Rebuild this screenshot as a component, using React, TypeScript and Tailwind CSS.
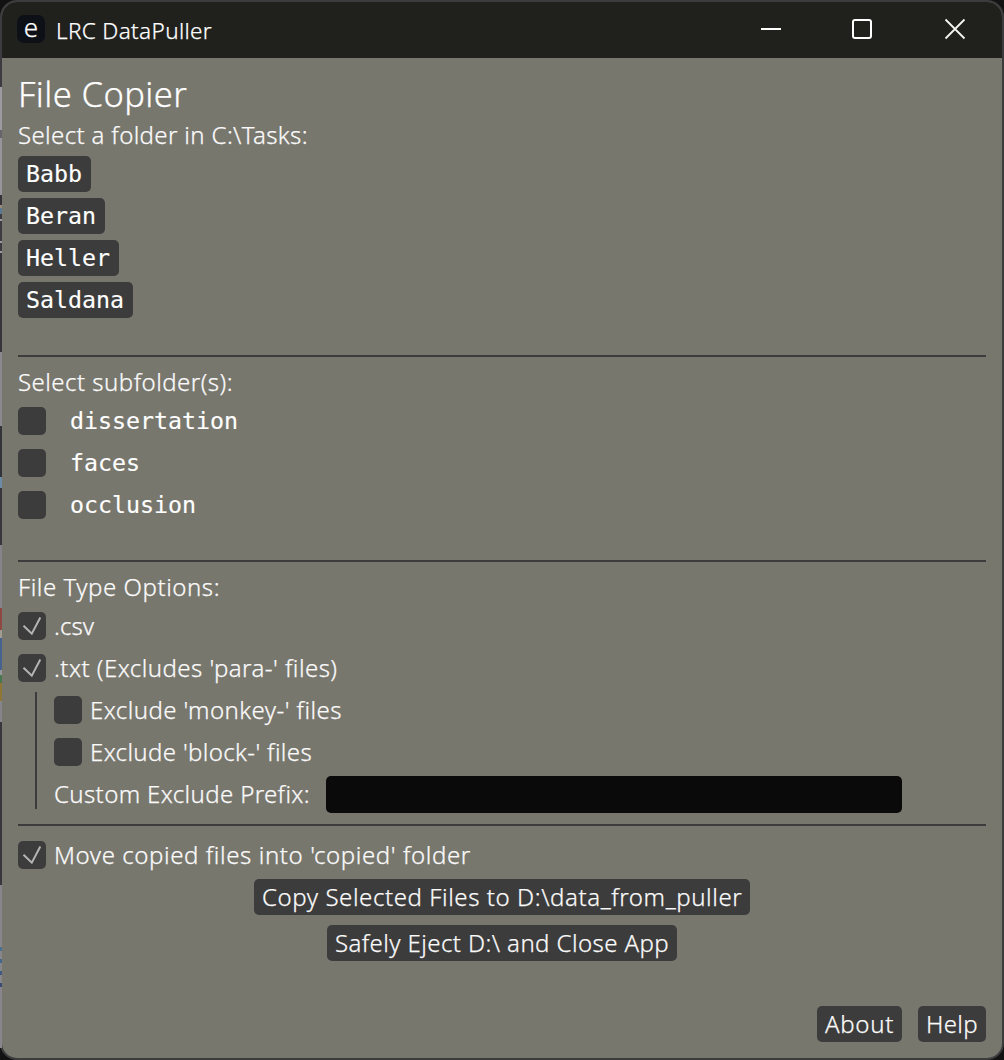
import type { ReactNode } from "react";

function Check({ checked = false }: { checked?: boolean }) {
  return (
    <span className="flex h-7 w-7 shrink-0 rounded-[5px] bg-[#3c3c3c]">
      {checked && (
        <svg viewBox="0 0 28 28" className="h-7 w-7" fill="none" stroke="#b4b4b4" strokeWidth="2">
          <path d="M5.5 13.7 L13.8 21.7 L22.3 5.5" />
        </svg>
      )}
    </span>
  );
}

function Option({ checked, spacing, children }: { checked?: boolean; spacing: string; children: ReactNode }) {
  return (
    <label className="flex h-7 items-center gap-2 leading-7">
      <Check checked={checked} />
      <span className={spacing}>{children}</span>
    </label>
  );
}

function Button({ width, spacing, children }: { width: string; spacing: string; children: ReactNode }) {
  return (
    <button className={`${width} ${spacing} flex h-9 items-center rounded-[5px] bg-[#3c3c3c] px-2 text-left leading-9`}>
      {children}
    </button>
  );
}

const folders = ["Babb", "Beran", "Heller", "Saldana"];
const subfolders = ["dissertation", "faces", "occlusion"];

const backdrop: [string, string][] = [
  ["h-[67px]", "bg-[#3b3b40]"],
  ["h-[43px]", "bg-[#9c9ba0]"],
  ["h-[8px]", "bg-[#66656a]"],
  ["h-[57px]", "bg-[#96959a]"],
  ["h-[10px]", "bg-[#333339]"],
  ["h-[3px]", "bg-[#9a8a78]"],
  ["h-[6px]", "bg-[#5b7794]"],
  ["h-[5px]", "bg-[#3b3b40]"],
  ["h-[2px]", "bg-[#9c9ba0]"],
  ["h-[20px]", "bg-[#3b3b40]"],
  ["h-[2px]", "bg-[#9c9ba0]"],
  ["h-[8px]", "bg-[#3b3b40]"],
  ["h-[2px]", "bg-[#9c9ba0]"],
  ["h-[99px]", "bg-[#36353b]"],
  ["h-[74px]", "bg-[#8b8a90]"],
  ["h-[51px]", "bg-[#33333a]"],
  ["h-[11px]", "bg-[#6b8ba6]"],
  ["h-[57px]", "bg-[#38373b]"],
  ["h-[63px]", "bg-[#85848a]"],
  ["h-[22px]", "bg-[#8f4741]"],
  ["h-[8px]", "bg-[#a19c91]"],
  ["h-[32px]", "bg-[#46628f]"],
  ["h-[5px]", "bg-[#98989c]"],
  ["h-[8px]", "bg-[#46774f]"],
  ["h-[18px]", "bg-[#8f7634]"],
  ["h-[21px]", "bg-[#86858a]"],
  ["h-[163px]", "bg-[#38373c]"],
  ["h-[62px]", "bg-[#87868b]"],
  ["h-[4px]", "bg-[#4a7190]"],
  ["h-[8px]", "bg-[#87868b]"],
  ["h-[4px]", "bg-[#44658c]"],
  ["h-[8px]", "bg-[#87868b]"],
  ["h-[4px]", "bg-[#3f5880]"],
  ["h-[8px]", "bg-[#87868b]"],
  ["h-[4px]", "bg-[#3b4a75]"],
  ["h-[61px]", "bg-[#87868b]"],
];

export default function App() {
  return (
    <div className="relative h-[1060px] w-[1004px] overflow-hidden bg-[#121212] font-['Noto_Sans',sans-serif] text-[24px] font-light whitespace-pre text-[#fafafa] [-webkit-text-stroke:0.25px]">
      <div className="flex h-full w-full flex-col overflow-hidden rounded-[17px] border-2 border-[#3c3c3e] bg-[#78776e]">
        <header className="flex h-14 shrink-0 items-center bg-[#20211d]">
          <span className="mb-[2px] ml-[15px] flex h-7 w-7 items-center justify-center rounded-[7px] bg-[#0d1117] pb-[3px] text-[26px] leading-none text-white">
            <span className="-mt-[2px]">e</span>
          </span>
          <span className="ml-[11px] pt-px text-[22.5px] leading-[56px] tracking-[0.35px] text-white">LRC DataPuller</span>
          <div className="mr-[36px] mb-[2px] ml-auto flex items-center">
            <span className="mr-[71px] h-[2px] w-5 bg-white" />
            <span className="mr-[72px] h-5 w-5 rounded-[3px] border-2 border-white" />
            <svg viewBox="0 0 22 22" className="h-[22px] w-[22px]" fill="none" stroke="#f4f4f0" strokeWidth="1.8">
              <path d="M1.5 1.5 L20.5 20.5 M20.5 1.5 L1.5 20.5" />
            </svg>
          </div>
        </header>

        <main className="flex flex-1 flex-col items-start px-4 pt-[14px]">
          <h1 className="h-[48px] text-[34.5px] leading-[44px] tracking-[0.4px] text-white">File Copier</h1>
          <p className="h-9 leading-[30px] tracking-[0.36px]">Select a folder in C:\Tasks:</p>
          <div className="flex flex-col items-start gap-1.5 font-['DejaVu_Sans_Mono',monospace] text-[23.25px] font-normal text-white [-webkit-text-stroke:0.15px]">
            {folders.map((f) => (
              <button key={f} className="flex h-9 items-start rounded-[5px] bg-[#3c3c3c] pr-[9px] pl-2 leading-[36px]">
                {f}
              </button>
            ))}
          </div>

          <hr className="mt-[37px] h-[2px] w-full border-0 bg-[#3c3c3c]" />

          <p className="mt-[10px] h-10 leading-[30px] tracking-[0.47px]">Select subfolder(s):</p>
          <div className="flex flex-col gap-[14px] font-['DejaVu_Sans_Mono',monospace] text-[23.25px] font-normal text-white [-webkit-text-stroke:0.15px]">
            {subfolders.map((s) => (
              <label key={s} className="flex h-7 items-center gap-6 leading-7">
                <Check />
                {s}
              </label>
            ))}
          </div>

          <hr className="mt-[41px] h-[2px] w-full border-0 bg-[#3c3c3c]" />

          <p className="mt-[10px] h-10 leading-[30px] tracking-[0.54px]">File Type Options:</p>
          <div className="flex flex-col gap-[14px]">
            <Option checked spacing="tracking-[0.05px]">.csv</Option>
            <Option checked spacing="tracking-[0.46px]">.txt (Excludes 'para-' files)</Option>
          </div>
          <div className="mt-[10px] ml-[17px] h-[117px] border-l-2 border-[#3c3c3c] pt-1 pl-[17px]">
            <div className="flex flex-col gap-[14px]">
              <Option spacing="tracking-[0.44px]">Exclude 'monkey-' files</Option>
              <Option spacing="tracking-[0.36px]">Exclude 'block-' files</Option>
            </div>
            <div className="mt-[10px] flex h-[37px] items-center">
              <span className="w-[272px] pb-[2px] tracking-[0.37px]">Custom Exclude Prefix:</span>
              <input aria-label="Custom Exclude Prefix" className="h-[37px] w-[576px] rounded-[5px] bg-[#0a0a0a] outline-none" />
            </div>
          </div>

          <hr className="mt-[15px] mb-[15px] h-[2px] w-full border-0 bg-[#3c3c3c]" />

          <Option checked spacing="tracking-[0.59px]">Move copied files into 'copied' folder</Option>
          <div className="mt-[10px] flex flex-col items-center gap-[10px] self-center">
            <Button width="w-[496px]" spacing="tracking-[0.58px]">Copy Selected Files to D:\data_from_puller</Button>
            <Button width="w-[350px]" spacing="tracking-[0.41px]">Safely Eject D:\ and Close App</Button>
          </div>
          <div className="mt-auto mb-4 flex gap-4 self-end">
            <Button width="w-[85px]" spacing="tracking-[0.7px]">About</Button>
            <Button width="w-[68px]" spacing="tracking-[0.35px]">Help</Button>
          </div>
        </main>
      </div>

      <div className="absolute top-5 left-0 flex w-[2px] flex-col">
        {backdrop.map(([height, color], i) => (
          <span key={i} className={`${height} ${color}`} />
        ))}
      </div>
    </div>
  );
}
